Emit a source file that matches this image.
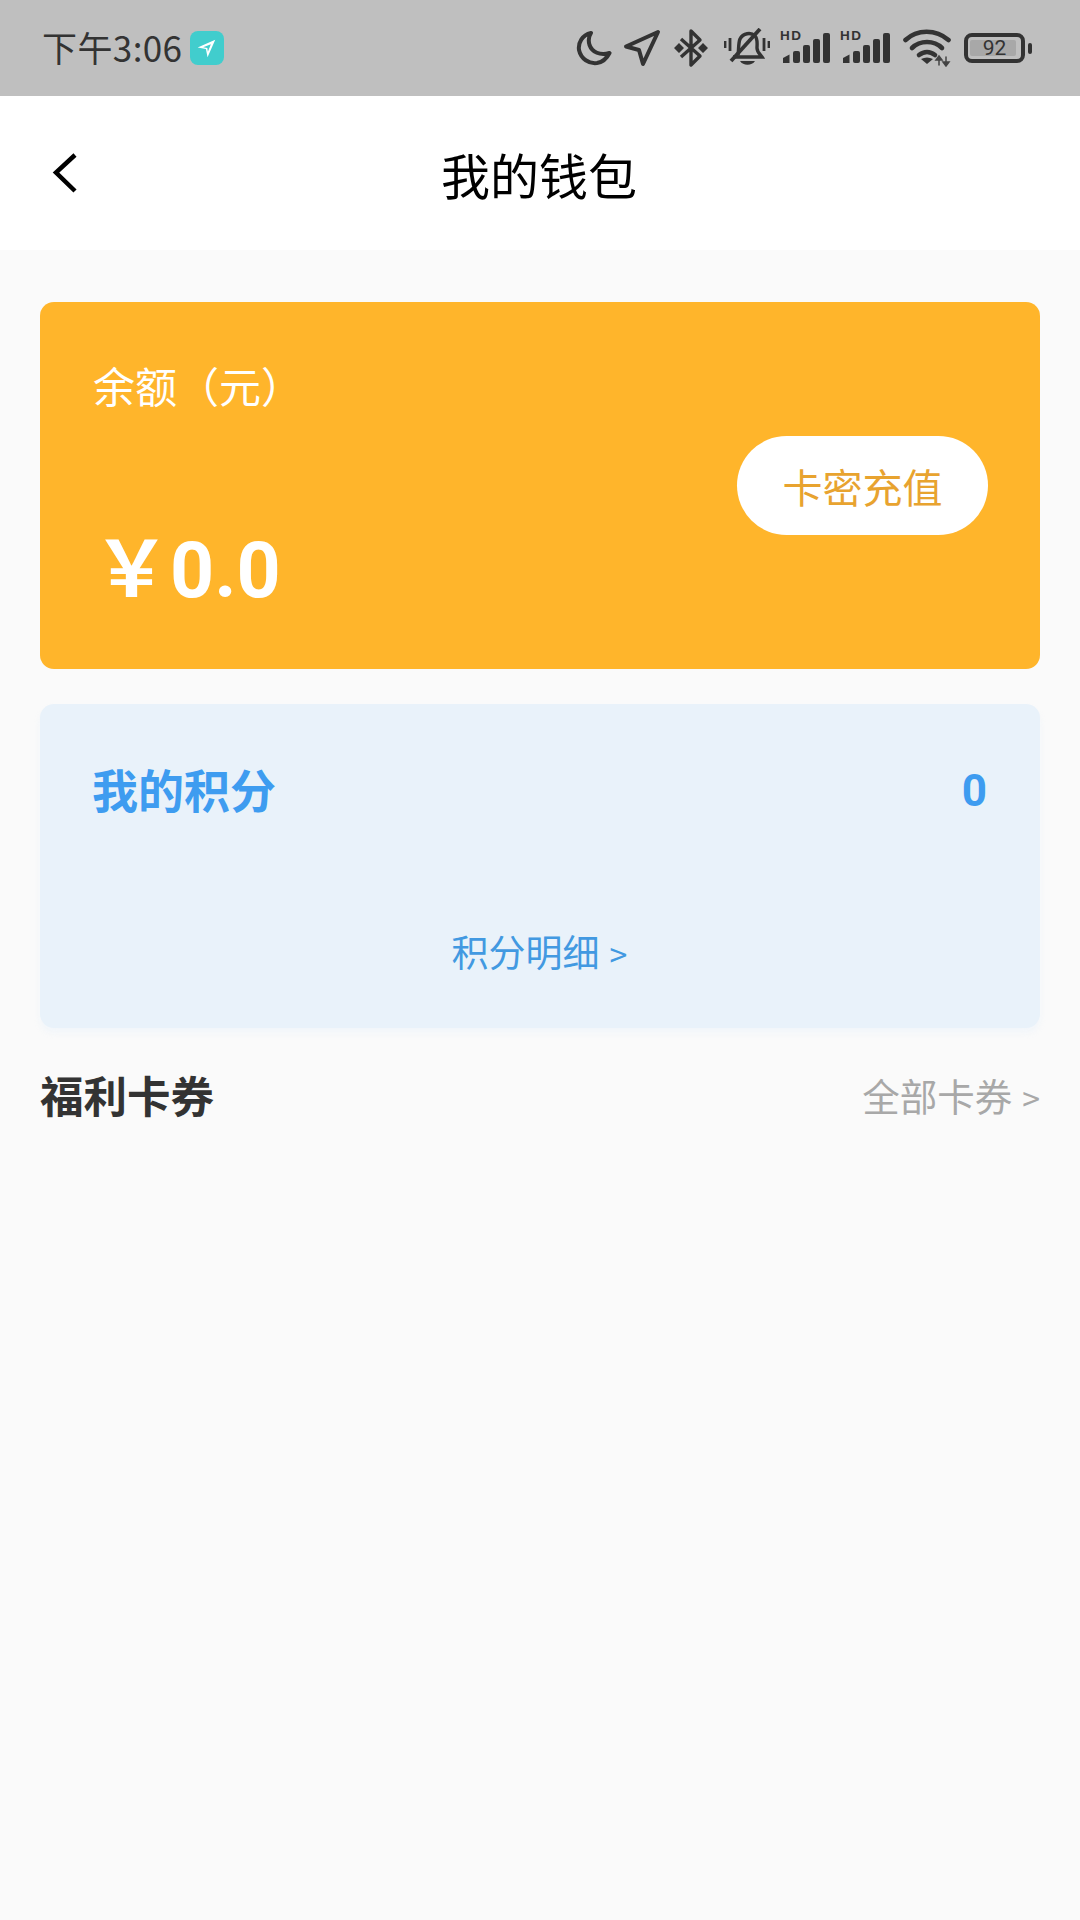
<template>
  <div class="page">
    <div class="status">
      <div class="status-left">
        <span class="time">下午3:06</span>
        <span class="nav-badge">
          <svg width="22" height="22" viewBox="0 0 20 20"><path d="M17.500 2.500 L1.500 9.500 L9 11 L10.500 18.500 Z M13.500 6.500 L6.500 9.300 L10.300 10 L10.800 13.500 Z" fill="#fff" fill-rule="evenodd"/></svg>
        </span>
      </div>
      <div class="status-right">
        <svg width="36" height="36" viewBox="0 0 36 36" fill="none" stroke="#333" stroke-width="4" stroke-linejoin="round" stroke-linecap="round"><path d="M15 3 C6 5 2 13 3 20 C5 29 13 34 21 33 C27 32 31 28 33.500 23 C24 26 16 22 13.500 15 C12 10 13 6 15 3 Z"/></svg>
        <svg width="38" height="38" viewBox="0 0 38 38" fill="none" stroke="#333" stroke-width="4" stroke-linejoin="round"><path d="M35 3 L3 17.500 L16 21 L20 35 Z"/></svg>
        <svg class="ml1" width="36" height="40" viewBox="0 0 36 40" fill="none" stroke="#333" stroke-width="3.400" stroke-linejoin="round"><path d="M8 11 L27 28 L18 37 L18 3 L27 12 L8 29"/><path d="M1 20 L6 15 L11 20 L6 25 Z M25 20 L30 15 L35 20 L30 25 Z" fill="#333" stroke="none"/></svg>
        <svg class="ml4" width="46" height="40" viewBox="0 0 46 40" fill="none" stroke="#333" stroke-width="3.400"><path d="M14 27 C15 22 14 16 16 11 C19 5 27 4 31 8 C34 11 33 16 33 20 C33 24 36 26 38 29 L9 29"/><path d="M36 1 L7 33" stroke-width="3.800"/><path d="M1 13 V20 M6 10 V23 M40 10 V23 M45 13 V20" stroke-width="2.800"/><path d="M16 33 H31 C28 38 19 38 16 33 Z" fill="#333" stroke="none"/></svg>
        <div v-for="n in 2" :key="n" class="signal mln1">
          <span class="hd">HD</span>
          <svg width="50" height="34" viewBox="0 0 50 34" fill="#333"><path d="M3 32 V27 L9.500 23.500 V32 Z"/><rect x="13" y="20" width="7" height="12" rx="2"/><rect x="23" y="14" width="7" height="18" rx="2"/><rect x="33" y="8" width="7" height="24" rx="2"/><rect x="43" y="2" width="7" height="30" rx="2"/></svg>
        </div>
        <svg class="ml2" width="48" height="38" viewBox="0 0 48 38" fill="none" stroke="#333" stroke-width="4.600" stroke-linecap="round"><path d="M2.500 11 C14 0 33 0 45.500 11"/><path d="M9 19 C17 11 31 11 39 19"/><path d="M16 26 C21 22 27 22 32 26"/><path d="M24 35 L18 30 C22 28 26 28 30 30 Z" fill="#333" stroke="none"/><path d="M36 27 L33 31 H39 Z M36 31 V36 M43 37 L40 33 H46 Z M43 28 V33" fill="#444" stroke="#444" stroke-width="1.500"/></svg>
        <div class="battery ml2">
          <div class="battery-body"><span class="battery-fill"></span><span class="battery-num">92</span></div>
          <span class="battery-cap"></span>
        </div>
      </div>
    </div>

    <header class="nav">
      <svg class="back" width="26" height="40" viewBox="0 0 26 40" fill="none" stroke="#000" stroke-width="4.500"><path d="M23 2 L4 19.500 L23 38"/></svg>
      <h1 class="title">我的钱包</h1>
    </header>

    <main class="content">
      <section class="balance">
        <div class="balance-left">
          <div class="balance-label">余额（元）</div>
          <div class="balance-value">￥0.0</div>
        </div>
        <button class="recharge">卡密充值</button>
      </section>

      <section class="points">
        <div class="points-row">
          <span class="points-label">我的积分</span>
          <span class="points-num">0</span>
        </div>
        <div class="points-link">积分明细<span class="chev">&gt;</span></div>
      </section>

      <section class="coupons">
        <span class="coupons-title">福利卡券</span>
        <span class="coupons-link">全部卡券<span class="chev">&gt;</span></span>
      </section>
    </main>
  </div>
</template>

<style>
html, body { margin: 0; background: #fafafa; }
</style>

<style scoped>
.page {
  width: 1080px;
  height: 1920px;
  background: #fafafa;
  font-family: "Noto Sans CJK SC", "Noto Sans", sans-serif;
  overflow: hidden;
}
.status {
  height: 96px;
  background: #bfbfbf;
  display: flex;
  align-items: center;
  justify-content: space-between;
  padding: 0 48px 0 42px;
  box-sizing: border-box;
}
.status-left { display: flex; align-items: center; gap: 8px; }
.time { position: relative; top: -2px; font-size: 35px; letter-spacing: 0.4px; color: #333; line-height: 1; }
.nav-badge {
  width: 34px; height: 34px; border-radius: 8px; background: #41cdcd;
  display: flex; align-items: center; justify-content: center;
}
.status-right { display: flex; align-items: center; gap: 11px; }
.ml1 { margin-left: 1px; }
.ml2 { margin-left: 2px; }
.ml4 { margin-left: 4px; }
.mln1 { margin-left: -1px; }
.signal { position: relative; width: 50px; height: 34px; }
.signal svg { display: block; }
.hd {
  position: absolute; left: 0; top: -2px;
  font: 700 13.500px/14px "Liberation Sans", sans-serif;
  letter-spacing: 1.500px; color: #333;
}
.battery { display: flex; align-items: center; gap: 3px; }
.battery-body {
  width: 61px; height: 30px; box-sizing: border-box;
  border: 4px solid #333; border-radius: 8px; position: relative;
  display: flex; align-items: center; justify-content: center;
}
.battery-fill { position: absolute; left: 2px; top: 3px; bottom: 3px; width: 46px; background: #a8a8a8; border-radius: 2px; }
.battery-num { position: relative; font: 400 21px "Roboto", sans-serif; color: #333; }
.battery-cap { width: 4px; height: 11px; background: #333; border-radius: 2px; }

.nav {
  height: 154px;
  background: #fff;
  position: relative;
  display: flex;
  align-items: center;
  justify-content: center;
}
.back { position: absolute; left: 52px; top: 57px; }
.title { margin: 0 2px 0 0; font-size: 49px; font-weight: 400; color: #000; line-height: 1; }

.content { padding: 52px 40px 0; display: flex; flex-direction: column; }
.balance {
  height: 367px;
  background: #ffb52b;
  border-radius: 14px;
  padding: 0 52px 0 53px;
  display: flex;
  justify-content: space-between;
  align-items: flex-start;
  box-sizing: border-box;
}
.balance-left { display: flex; flex-direction: column; }
.balance-label { margin-top: 58px; font-size: 42px; line-height: 50px; color: #fff; }
.balance-value { margin-top: 116px; font-family: "Roboto", "Noto Sans CJK SC", sans-serif; font-size: 77px; font-weight: 700; line-height: 90px; color: #fff; }
.recharge {
  margin-top: 134px;
  width: 251px; height: 99px;
  border: 0; border-radius: 50px; background: #fff;
  color: #e8a32f; font: 400 40px "Noto Sans CJK SC", sans-serif;
  padding: 0;
}
.points {
  margin-top: 35px;
  height: 324px;
  background: #e9f2fa;
  border-radius: 14px;
  padding: 0 53px 0 52px;
  box-sizing: border-box;
  display: flex;
  flex-direction: column;
  box-shadow: 0 5px 6px rgba(233, 242, 250, 0.45);
}
.points-row { display: flex; justify-content: space-between; align-items: center; margin-top: 54px; height: 60px; }
.points-label { font-size: 46px; font-weight: 700; color: #3e9cf0; line-height: 60px; }
.points-num { position: relative; top: 3px; font-family: "Roboto", sans-serif; font-size: 44px; font-weight: 700; color: #3e9cf0; }
.points-link { margin-top: 108px; text-align: center; font-size: 37px; line-height: 50px; color: #4299e1; }
.chev { font-size: 32px; margin-left: 10px; }
.coupons { margin-top: 37px; display: flex; justify-content: space-between; align-items: center; height: 60px; }
.coupons-title { font-size: 43.500px; font-weight: 700; color: #333; line-height: 60px; }
.coupons-link { position: relative; top: 1px; font-size: 37.500px; color: #a8a8a8; line-height: 60px; }
</style>
